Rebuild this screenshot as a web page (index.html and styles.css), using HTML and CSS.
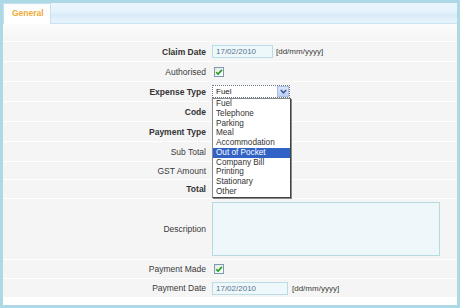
FILE: index.html
```html
<!DOCTYPE html>
<html>
<head>
<meta charset="utf-8">
<link rel="stylesheet" href="styles.css">
</head>
<body>
<div class="frame">
  <div class="tabs"><div class="tab">General</div></div>
  <div class="form">
    <div class="spacer"></div>
    <div class="row r20"><span class="lbl b">Claim Date</span><div class="ctl"><span class="inp w61">17/02/2010</span><span class="hint">[dd/mm/yyyy]</span></div></div>
    <div class="row r20"><span class="lbl">Authorised</span><div class="ctl"><span class="chk"><svg width="10" height="10" viewBox="0 0 10 10"><path d="M2.2 5.2 L4.1 7.1 L7.9 2.9" fill="none" stroke="#22a022" stroke-width="1.6"/></svg></span></div></div>
    <div class="row r20"><span class="lbl b">Expense Type</span><div class="ctl"><span class="sel"><span class="seltxt">Fuel</span><span class="arrow"><svg width="7" height="5" viewBox="0 0 7 5"><path d="M0.8 1 L3.5 3.8 L6.2 1" fill="none" stroke="#3b5a8a" stroke-width="1.5"/></svg></span></span></div></div>
    <div class="row r20"><span class="lbl b">Code</span><div class="ctl"></div></div>
    <div class="row r20"><span class="lbl b">Payment Type</span><div class="ctl"></div></div>
    <div class="row r20"><span class="lbl">Sub Total</span><div class="ctl"></div></div>
    <div class="row r18"><span class="lbl">GST Amount</span><div class="ctl"></div></div>
    <div class="row r19"><span class="lbl b">Total</span><div class="ctl"></div></div>
    <div class="row r61"><span class="lbl">Description</span><div class="ctl"><span class="area"></span></div></div>
    <div class="row r19"><span class="lbl">Payment Made</span><div class="ctl"><span class="chk"><svg width="10" height="10" viewBox="0 0 10 10"><path d="M2.2 5.2 L4.1 7.1 L7.9 2.9" fill="none" stroke="#22a022" stroke-width="1.6"/></svg></span></div></div>
    <div class="row r19"><span class="lbl">Payment Date</span><div class="ctl"><span class="inp w76">17/02/2010</span><span class="hint">[dd/mm/yyyy]</span></div></div>
  </div>
  <ul class="dropdown">
    <li>Fuel</li>
    <li>Telephone</li>
    <li>Parking</li>
    <li>Meal</li>
    <li>Accommodation</li>
    <li class="on">Out of Pocket</li>
    <li>Company Bill</li>
    <li>Printing</li>
    <li>Stationary</li>
    <li>Other</li>
  </ul>
</div>
</body>
</html>
```
FILE: styles.css
```css
html, body { margin: 0; padding: 0; background: #fff; }
body { font-family: "Liberation Sans", Arial, sans-serif; color: #333; }
.frame {
  position: relative;
  width: 460px; height: 308px;
  box-sizing: border-box;
  border: 3px solid #add8e6;
  background: #fff;
}
.tabs {
  height: 20px;
  border-bottom: 1px solid #c7e2f1;
  background: linear-gradient(#eaf5fd 0%, #e6f3fc 40%, #d9ebf8 60%, #e8f4fc 100%);
}
.tab {
  width: 48px; height: 21px;
  box-sizing: border-box;
  border: 1px solid #c5e0ef;
  border-bottom: none;
  background: linear-gradient(#fbfdff, #ffffff);
  color: #f0ab38;
  font-weight: bold;
  font-size: 8.5px;
  padding-left: 8px;
  line-height: 19px;
}
.spacer { height: 17px; background: linear-gradient(#fbfbfb, #f5f5f5); }
.row {
  display: grid;
  grid-template-columns: 203px 1fr;
  column-gap: 6px;
  align-items: center;
  box-sizing: border-box;
  border-top: 1px solid #fff;
  background: #f5f5f5;
}
.r20 { height: 20px; }
.r19 { height: 19px; }
.r18 { height: 18px; }
.r61 { height: 61px; }
.lbl { text-align: right; font-size: 8.5px; color: #3a3a3a; }
.lbl.b { font-weight: bold; color: #333; }
.ctl { display: flex; align-items: center; }
.inp {
  box-sizing: border-box;
  height: 13px;
  border: 1px solid #b9dde6;
  background: #eef8fb;
  color: #56738c;
  font-size: 8px;
  line-height: 11px;
  padding-left: 3px;
}
.w61 { width: 61px; }
.w76 { width: 76px; }
.hint { font-size: 8px; color: #3a3a3a; margin-left: 3px; }
.row.r19 .hint { margin-left: 4px; }
.chk {
  display: block;
  width: 10px; height: 10px;
  box-sizing: border-box;
  margin-left: 2px;
  border: 1px solid #7b9bb4;
  background: linear-gradient(135deg, #e6e6e0, #ffffff);
}
.chk svg { display: block; margin: -1px 0 0 -1px; }
.sel {
  position: relative;
  display: block;
  width: 78px; height: 13px;
  box-sizing: border-box;
  border: 1px dotted #6a7a88;
  background: #fff;
}
.seltxt { position: absolute; left: 3px; top: 0; font-size: 8px; line-height: 11px; color: #222; }
.arrow {
  position: absolute;
  right: 0; top: 0;
  width: 12px; height: 11px;
  box-sizing: border-box;
  border: 1px solid #a9bfe6;
  background: linear-gradient(#dbe6fb, #bcd0f6);
  display: flex; align-items: center; justify-content: center;
}
.arrow svg { display: block; }
.area {
  display: block;
  width: 228px; height: 54px;
  box-sizing: border-box;
  border: 1px solid #b7dadf;
  background: #eef8fa;
}
.dropdown {
  position: absolute;
  left: 209px; top: 95px;
  width: 79px;
  margin: 0; padding: 0;
  list-style: none;
  box-sizing: border-box;
  border: 1px solid #8a8a8a;
  border-right-color: #444;
  border-bottom-color: #444;
  box-shadow: 1px 1px 0 #888;
  background: #fff;
}
.dropdown li {
  height: 9.75px;
  line-height: 9.75px;
  font-size: 8.2px;
  padding-left: 3px;
  color: #333;
  white-space: nowrap;
}
.dropdown li.on { background: #3162c6; color: #fff; }
```
